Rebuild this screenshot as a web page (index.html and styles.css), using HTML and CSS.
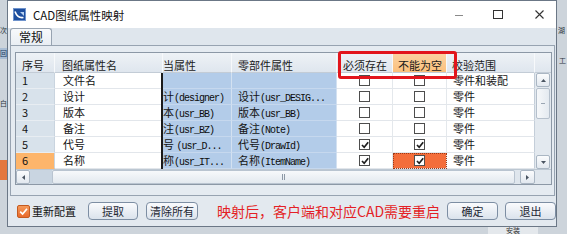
FILE: index.html
```html
<!DOCTYPE html>
<html lang="zh">
<head>
<meta charset="utf-8">
<title>CAD图纸属性映射</title>
<link rel="stylesheet" href="styles.css">
</head>
<body>
<div class="desktop">
  <span class="bg-bit bg-ci">次</span>
  <span class="bg-bit bg-hui">回</span>
  <span class="bg-bit bg-bai">白</span>
  <span class="bg-bit bg-orange"></span>
  <span class="bg-bit bg-hu">湖</span>
  <span class="bg-bit bg-gong">工</span>
  <span class="bg-bit bg-anzhuang">安装</span>

  <div class="window">
    <div class="titlebar">
      <svg class="app-icon" width="13" height="13" viewBox="0 0 13 13">
        <rect width="13" height="13" fill="#1e4f9f"/>
        <rect x="0.5" y="0.5" width="12" height="12" fill="none" stroke="#6f93cc" stroke-width="1"/>
        <path d="M2 3.5 Q4.5 10.5 10.5 9.5" stroke="#ffffff" stroke-width="1.6" fill="none"/>
        <path d="M7 4 L11 4 L11 8 Z" fill="#b9d3f2"/>
      </svg>
      <span class="title">CAD图纸属性映射</span>
      <div class="controls">
        <svg class="ctl-min" width="8" height="9" viewBox="0 0 8 9"><line x1="0" y1="5.5" x2="8" y2="5.5" stroke="#8a8a8a" stroke-width="1"/></svg>
        <svg class="ctl-max" width="10" height="9" viewBox="0 0 10 9"><rect x="0.5" y="0.5" width="9" height="8" fill="none" stroke="#333" stroke-width="1"/></svg>
        <svg class="ctl-close" width="9" height="9" viewBox="0 0 9 9"><path d="M0.5 0.5 L8.5 8.5 M8.5 0.5 L0.5 8.5" stroke="#333" stroke-width="1.1"/></svg>
      </div>
    </div>

    <div class="tabs"><div class="tab">常规</div></div>

    <div class="panel">
      <div class="grid">
        <div class="h">序号</div>
        <div class="h h-name">图纸属性名</div>
        <div class="h h-cur">当属性</div>
        <div class="h">零部件属性</div>
        <div class="h h-must">必须存在</div>
        <div class="h h-empty">不能为空</div>
        <div class="h h-scope">校验范围</div>
        <div class="h h-blank"></div>

        <div class="freeze"></div>
        <div class="vscroll">
          <div class="sb-btn sb-up"><svg width="5" height="3" viewBox="0 0 5 3"><path d="M0 3 L2.5 0 L5 3 Z" fill="#4a5562"/></svg></div>
          <div class="vthumb"></div>
          <div class="vtrack"></div>
          <div class="sb-btn sb-down"><svg width="5" height="3" viewBox="0 0 5 3"><path d="M0 0 L2.5 3 L5 0 Z" fill="#4a5562"/></svg></div>
        </div>

        <!-- row 1 -->
        <div class="c num">1</div>
        <div class="c name">文件名</div>
        <div class="c blue cur"></div>
        <div class="c blue part"></div>
        <div class="c chk"><span class="cb"></span></div>
        <div class="c chk"><span class="cb"></span></div>
        <div class="c scope">零件和装配</div>

        <!-- row 2 -->
        <div class="c num">2</div>
        <div class="c name">设计</div>
        <div class="c blue cur">计<span class="en">(designer)</span></div>
        <div class="c blue part">设计<span class="en">(usr_DESIG...</span></div>
        <div class="c chk"><span class="cb"></span></div>
        <div class="c chk"><span class="cb"></span></div>
        <div class="c scope">零件</div>

        <!-- row 3 -->
        <div class="c num">3</div>
        <div class="c name">版本</div>
        <div class="c blue cur">本<span class="en">(usr_BB)</span></div>
        <div class="c blue part">版本<span class="en">(usr_BB)</span></div>
        <div class="c chk"><span class="cb"></span></div>
        <div class="c chk"><span class="cb"></span></div>
        <div class="c scope">零件</div>

        <!-- row 4 -->
        <div class="c num">4</div>
        <div class="c name">备注</div>
        <div class="c blue cur">注<span class="en">(usr_BZ)</span></div>
        <div class="c blue part">备注<span class="en">(Note)</span></div>
        <div class="c chk"><span class="cb"></span></div>
        <div class="c chk"><span class="cb"></span></div>
        <div class="c scope">零件</div>

        <!-- row 5 -->
        <div class="c num">5</div>
        <div class="c name">代号</div>
        <div class="c blue cur">号 <span class="en">(usr_D...</span></div>
        <div class="c blue part">代号<span class="en">(DrawId)</span></div>
        <div class="c chk"><span class="cb on"><svg width="8" height="8" viewBox="0 0 8 8"><path d="M1 4 L3.2 6.3 L7.2 1.3" stroke="#1e1e1e" stroke-width="1.7" fill="none"/></svg></span></div>
        <div class="c chk"><span class="cb on"><svg width="8" height="8" viewBox="0 0 8 8"><path d="M1 4 L3.2 6.3 L7.2 1.3" stroke="#1e1e1e" stroke-width="1.7" fill="none"/></svg></span></div>
        <div class="c scope">零件</div>

        <!-- row 6 -->
        <div class="c num num-sel">6</div>
        <div class="c name">名称</div>
        <div class="c blue cur">称<span class="en">(usr_IT...</span></div>
        <div class="c blue part">名称<span class="en">(ItemName)</span></div>
        <div class="c chk"><span class="cb on"><svg width="8" height="8" viewBox="0 0 8 8"><path d="M1 4 L3.2 6.3 L7.2 1.3" stroke="#1e1e1e" stroke-width="1.7" fill="none"/></svg></span></div>
        <div class="c chk chk-focus"><span class="cb on"><svg width="8" height="8" viewBox="0 0 8 8"><path d="M1 4 L3.2 6.3 L7.2 1.3" stroke="#1e1e1e" stroke-width="1.7" fill="none"/></svg></span></div>
        <div class="c scope">零件</div>

        <div class="hscroll">
          <div class="sb-btn sb-left"><svg width="3" height="5" viewBox="0 0 3 5"><path d="M3 0 L0 2.5 L3 5 Z" fill="#4a5562"/></svg></div>
          <div class="htrack-a"></div>
          <div class="hthumb"><span class="grip"></span></div>
          <div class="htrack-b"></div>
          <div class="sb-btn sb-right"><svg width="3" height="5" viewBox="0 0 3 5"><path d="M0 0 L3 2.5 L0 5 Z" fill="#4a5562"/></svg></div>
        </div>
        <div class="corner"></div>

        <div class="highlight"></div>
      </div>
    </div>

    <div class="footer">
      <span class="fcb"><svg width="9" height="9" viewBox="0 0 9 9"><path d="M1.2 4.6 L3.6 7 L8 1.8" stroke="#ffffff" stroke-width="1.7" fill="none"/></svg></span>
      <span class="flabel">重新配置</span>
      <button class="btn btn-fetch">提取</button>
      <button class="btn btn-clear">清除所有</button>
      <span class="notice">映射后，客户端和对应CAD需要重启</span>
      <button class="btn btn-ok">确定</button>
      <button class="btn btn-exit">退出</button>
    </div>
  </div>
</div>
</body>
</html>
```

FILE: styles.css
```css
* { box-sizing: border-box; }

html, body {
  margin: 0;
  padding: 0;
}

body {
  font-family: "Noto Sans CJK SC", "Noto Sans", sans-serif;
  color: #151515;
  background: #cfd6dd;
}

.desktop {
  position: relative;
  width: 567px;
  height: 234px;
  overflow: hidden;
  background: #cdd4db;
}

/* pieces of the application behind the dialog */
.bg-bit {
  position: absolute;
  font-size: 7px;
  line-height: 8px;
  color: #2c3440;
}
.bg-ci { left: 0; top: 26px; }
.bg-hui { left: 0; top: 48px; width: 7px; height: 11px; background: #a9bdd4; color: #203a60; padding-top: 1px; }
.bg-bai { left: 0; top: 99px; }
.bg-orange { left: 0; top: 160px; width: 7px; height: 20px; background: #e3773f; }
.bg-hu { left: 558px; top: 26px; }
.bg-gong { left: 559px; top: 56px; }
.bg-anzhuang { left: 488px; top: 226px; width: 50px; height: 8px; background: #e4e8ec; text-align: center; color: #333; }

.window {
  position: relative;
  z-index: 1;
  margin-left: 7px;
  width: 550px;
  height: 227px;
  border: 1px solid #6b7786;
  background: #dfe6ed;
  display: flex;
  flex-direction: column;
}

.titlebar {
  height: 27px;
  flex: none;
  background: #ffffff;
  display: flex;
  align-items: center;
  padding-left: 5px;
}

.app-icon { display: block; flex: none; }

.title {
  margin-left: 7px;
  font-size: 11.5px;
  line-height: 14px;
  color: #111;
}

.controls {
  margin-left: auto;
  display: flex;
  align-items: center;
  padding-bottom: 1px;
}
.controls svg { display: block; }
.ctl-min { margin-right: 30px; }
.ctl-max { margin-right: 32px; }
.ctl-close { margin-right: 12px; }

.tabs {
  height: 17px;
  flex: none;
  display: flex;
  align-items: flex-end;
  padding-left: 2px;
}

.tab {
  width: 42px;
  height: 17px;
  border: 1px solid #97a3b1;
  border-bottom: none;
  border-radius: 3px 3px 0 0;
  background: linear-gradient(#f7f9fb, #e9eef3);
  font-size: 12px;
  line-height: 15px;
  padding-left: 8px;
  color: #111;
}

.panel {
  flex: none;
  margin: 0 1px 0 2px;
  height: 151px;
  border: 1px solid #97a3b1;
  background: #e5ebf1;
  padding: 6px 2px 0 4px;
}

/* ---------- grid ---------- */
.grid {
  position: relative;
  display: grid;
  grid-template-columns: 39px 106px 2px 69px 105px 56px 54px 88px 16px;
  grid-template-rows: 20px repeat(6, 16px) 15px;
  width: max-content;
  border: 1px solid #8c98a6;
  background: #ffffff;
}

.h {
  font-size: 11px;
  line-height: 14px;
  padding: 5px 0 0 6px;
  white-space: nowrap;
  overflow: hidden;
  color: #1a1a1a;
  background: linear-gradient(#eef2f6, #dfe6ee);
  border-right: 1px solid #f7f9fb;
  border-bottom: 1px solid #c3ccd6;
}
.h-name { grid-column: span 2; padding-left: 7px; }
.h-cur { padding-left: 0; }
.h-must { padding-left: 6px; }
.h-empty { padding-left: 5px; background: linear-gradient(#fbd3a2, #fbc07c); }
.h-scope { padding-left: 5px; }
.h-blank { border-right: none; }

.freeze {
  grid-column: 3;
  grid-row: 2 / 8;
  background: #1b1b1b;
}

.c {
  font-size: 11px;
  line-height: 15px;
  white-space: nowrap;
  overflow: hidden;
  color: #141414;
  border-bottom: 1px solid #e2e6eb;
  border-right: 1px solid #e4e8ec;
}

.en {
  font-family: "Liberation Mono", "DejaVu Sans Mono", monospace;
  font-size: 10px;
  letter-spacing: -1px;
  color: #0c0c0c;
}

.num {
  background: #d8e2eb;
  padding-left: 6px;
  border-bottom-color: #e8edf2;
  border-right-color: #c9d4df;
}
.num-sel { background: #fdb56b; border-bottom-color: #fdb56b; }

.name { padding-left: 8px; border-right: none; }

.blue {
  background: #b3cce9;
  border-bottom-color: #c6d8ee;
  border-right-color: #d3e1f1;
}
.cur { padding-left: 0; }
.part { padding-left: 6px; }

.chk {
  display: flex;
  align-items: center;
  justify-content: center;
}
.chk-focus {
  background: #f46e3b;
  outline: 1px dotted #9b3a17;
  outline-offset: -1px;
}

.cb {
  width: 11px;
  height: 11px;
  border: 1.5px solid #4d4d4d;
  background: #ffffff;
  display: flex;
  align-items: center;
  justify-content: center;
}
.cb svg { display: block; }

.scope { padding-left: 6px; border-right: 1px solid #c4ced9; }

/* scrollbars */
.vscroll {
  grid-column: 9;
  grid-row: 2 / 8;
  display: flex;
  flex-direction: column;
  background: #e3e9ef;
  padding: 0 1px;
}
.sb-btn {
  display: flex;
  align-items: center;
  justify-content: center;
  border: 1px solid #aab6c3;
  border-radius: 2px;
  background: linear-gradient(#fbfcfd, #e2e8ef);
}
.sb-btn svg { display: block; }
.sb-up { height: 14px; }
.sb-down { height: 14px; }
.vthumb {
  height: 31px;
  margin-top: 1px;
  border: 1px solid #b5c0cc;
  border-radius: 2px;
  background: linear-gradient(90deg, #f6f8fa, #e4eaf0);
  position: relative;
}
.vthumb::before {
  content: "";
  position: absolute;
  left: 4px;
  right: 4px;
  top: 14px;
  height: 1px;
  background: #9aa6b3;
}
.vtrack { flex: 1; }

.hscroll {
  grid-column: 1 / 9;
  grid-row: 8;
  display: flex;
  background: #dfe6ed;
  border-top: 1px solid #bcc7d2;
}
.sb-left { width: 14px; }
.sb-right { width: 15px; }
.htrack-a { width: 22px; background: #c9d5e1; }
.hthumb {
  width: 463px;
  border: 1px solid #b9c4d0;
  border-radius: 2px;
  background: linear-gradient(#f7f9fb, #e3e9ef);
  display: flex;
  align-items: center;
  justify-content: center;
}
.grip {
  width: 3px;
  height: 6px;
  border-left: 1px solid #8d99a6;
  border-right: 1px solid #8d99a6;
}
.htrack-b { width: 5px; }

.corner {
  grid-column: 9;
  grid-row: 8;
  background: #dfe6ed;
  border-top: 1px solid #bcc7d2;
}

.highlight {
  position: absolute;
  left: 322px;
  top: -2px;
  width: 119px;
  height: 28px;
  border: 3px solid #e2151c;
  border-radius: 3px;
  pointer-events: none;
}

/* ---------- footer ---------- */
.footer {
  flex: 1;
  display: flex;
  align-items: center;
  padding-left: 9px;
  background: #e3e9ef;
}

.fcb {
  width: 13px;
  height: 13px;
  border: 1px solid #c45a20;
  border-radius: 2px;
  background: linear-gradient(#f59a5a, #e9692b);
  display: flex;
  align-items: center;
  justify-content: center;
}
.fcb svg { display: block; }

.flabel {
  margin-left: 2px;
  font-size: 11px;
  line-height: 14px;
  color: #111;
}

.btn {
  height: 18px;
  padding: 0;
  border: 1px solid #7d8ea3;
  border-radius: 4px;
  background: linear-gradient(#fafbfd, #dbe3ec);
  font-family: "Noto Sans CJK SC", sans-serif;
  font-size: 11px;
  line-height: 15px;
  color: #1d2733;
  text-align: center;
}
.btn-fetch { width: 50px; margin-left: 12px; }
.btn-clear { width: 52px; margin-left: 8px; }
.btn-ok { width: 51px; margin-left: 7px; }
.btn-exit { width: 51px; margin-left: 7px; }

.notice {
  margin-left: 19px;
  font-size: 14px;
  line-height: 18px;
  color: #e41f26;
  white-space: nowrap;
}
```
